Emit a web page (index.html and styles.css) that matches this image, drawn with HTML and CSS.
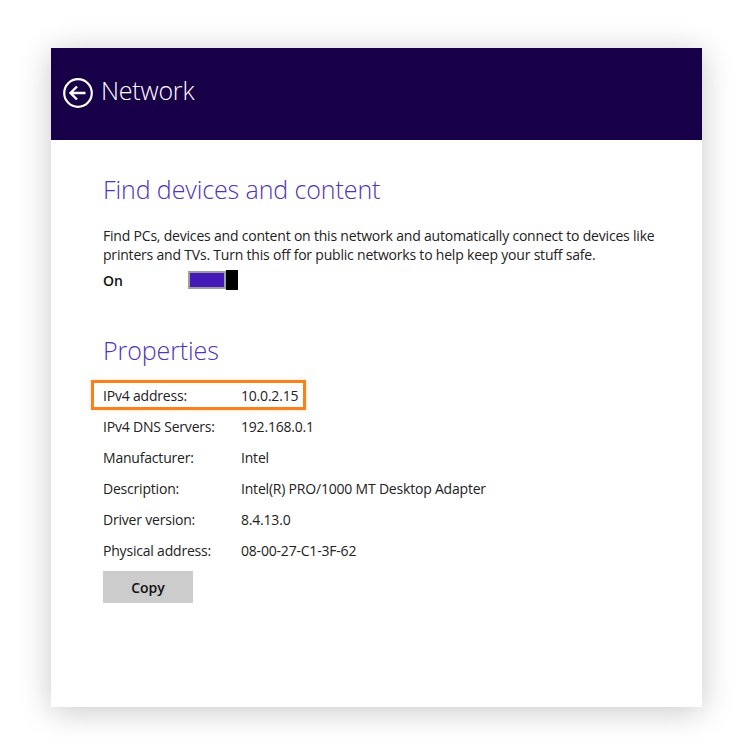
FILE: index.html
```html
<!DOCTYPE html>
<html>
<head>
<meta charset="utf-8">
<link rel="stylesheet" href="styles.css">
</head>
<body>
<div class="panel">
  <div class="header">
    <svg class="back" width="30" height="30" viewBox="0 0 30 30">
      <circle cx="15" cy="15" r="13.8" fill="none" stroke="#fff" stroke-width="2.2"/>
      <path d="M7.5 15 H22.5 M14 8.5 L7.5 15 L14 21.5" fill="none" stroke="#fff" stroke-width="2.4" stroke-linejoin="miter"/>
    </svg>
    <span class="title">Network</span>
  </div>
  <div class="content">
    <h2 class="heading first">Find devices and content</h2>
    <p class="desc">Find PCs, devices and content on this network and automatically connect to devices like printers and TVs. Turn this off for public networks to help keep your stuff safe.</p>
    <div class="toggle-row">
      <span class="state">On</span>
      <span class="toggle"><span class="track"><span class="fill"></span></span><span class="thumb"></span></span>
    </div>
    <h2 class="heading second">Properties</h2>
    <div class="props">
      <div class="row highlight"><span class="label">IPv4 address:</span><span class="value">10.0.2.15</span></div>
      <div class="row"><span class="label">IPv4 DNS Servers:</span><span class="value">192.168.0.1</span></div>
      <div class="row"><span class="label">Manufacturer:</span><span class="value">Intel</span></div>
      <div class="row"><span class="label">Description:</span><span class="value">Intel(R) PRO/1000 MT Desktop Adapter</span></div>
      <div class="row"><span class="label">Driver version:</span><span class="value">8.4.13.0</span></div>
      <div class="row"><span class="label">Physical address:</span><span class="value">08-00-27-C1-3F-62</span></div>
    </div>
    <button class="copy">Copy</button>
  </div>
</div>
</body>
</html>
```

FILE: styles.css
```css
html, body {
  margin: 0;
  padding: 0;
  background: #ffffff;
}
body {
  padding: 48px 0 0 51px;
  height: 754px;
  box-sizing: border-box;
  font-family: "Open Sans", "Noto Sans", "DejaVu Sans", sans-serif;
}
.panel {
  width: 651px;
  height: 659px;
  background: #fff;
  box-shadow: 0 4px 30px rgba(0,0,0,0.22);
}
.header {
  height: 92px;
  background: #180048;
  display: flex;
  align-items: center;
  padding-left: 12px;
  box-sizing: border-box;
}
.back {
  display: block;
  margin-top: -3px;
}
.title {
  color: #fff;
  font-size: 25px;
  font-weight: 300;
  margin-left: 8px;
  margin-top: -8px;
  letter-spacing: -0.2px;
}
.content {
  padding-left: 52px;
  padding-right: 30px;
}
.heading {
  margin: 0;
  font-size: 25px;
  font-weight: 300;
  color: #4f35b8;
  line-height: 32px;
  letter-spacing: -0.1px;
}
.heading.first {
  padding-top: 33px;
}
.desc {
  margin: 21px 0 0 0;
  font-size: 14px;
  line-height: 19px;
  color: #222;
  width: 580px;
  letter-spacing: -0.2px;
}
.toggle-row {
  display: flex;
  align-items: center;
  margin-top: 5px;
  height: 22px;
}
.state {
  font-size: 14px;
  font-weight: 600;
  color: #111;
  width: 85px;
}
.toggle {
  display: flex;
  align-items: center;
}
.track {
  width: 38px;
  height: 18px;
  background: #9e9e9e;
  padding: 2px;
  box-sizing: border-box;
  display: block;
}
.fill {
  display: block;
  width: 100%;
  height: 100%;
  background: #4518b8;
}
.thumb {
  display: block;
  width: 12px;
  height: 20px;
  background: #000;
}
.heading.second {
  margin-top: 43px;
}
.props {
  margin-top: 14px;
  margin-left: -12px;
}
.row {
  display: flex;
  align-items: center;
  height: 31px;
  padding-left: 12px;
  font-size: 14px;
  color: #222;
  letter-spacing: -0.2px;
  box-sizing: border-box;
}
.row.highlight {
  width: 215px;
  height: 30px;
  border: 3px solid #f9801a;
  padding-left: 9px;
  margin-bottom: 1px;
  box-shadow: 0 0 4px rgba(249,128,26,0.25);
}
.label {
  width: 138px;
  flex: none;
}
.copy {
  display: block;
  margin-top: 5px;
  width: 90px;
  height: 32px;
  background: #cccccc;
  border: none;
  font-family: "Open Sans", "Noto Sans", sans-serif;
  font-size: 14px;
  font-weight: 600;
  color: #111;
  padding: 0;
}
```
